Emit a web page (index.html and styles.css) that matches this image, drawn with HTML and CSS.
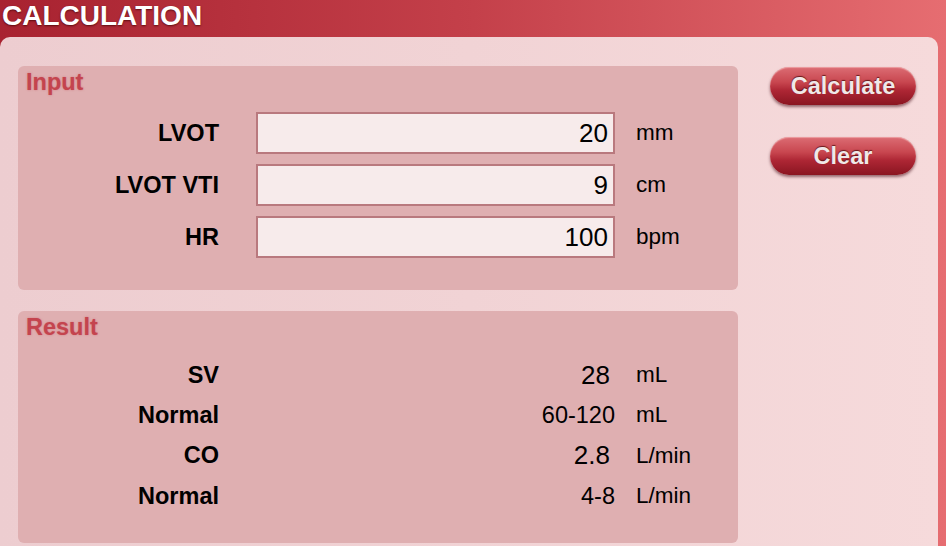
FILE: index.html
```html
<!DOCTYPE html>
<html lang="en">
<head>
    <meta charset="UTF-8">
    <meta name="viewport" content="width=device-width, initial-scale=1.0">
    <title>Calculation</title>
    <link rel="stylesheet" href="styles.css">
</head>
<body>
    <header class="topbar">
        <h1>CALCULATION</h1>
    </header>

    <main class="panel">
        <div class="sections">
            <section class="box box-input">
                <h2>Input</h2>
                <div class="rows">
                    <label for="lvot">LVOT</label>
                    <input type="text" id="lvot" value="20">
                    <span class="unit">mm</span>

                    <label for="vti">LVOT VTI</label>
                    <input type="text" id="vti" value="9">
                    <span class="unit">cm</span>

                    <label for="hr">HR</label>
                    <input type="text" id="hr" value="100">
                    <span class="unit">bpm</span>
                </div>
            </section>

            <section class="box box-result">
                <h2>Result</h2>
                <div class="rows results">
                    <span class="name">SV</span>
                    <span class="value">28</span>
                    <span class="unit">mL</span>

                    <span class="name">Normal</span>
                    <span class="value range">60-120</span>
                    <span class="unit">mL</span>

                    <span class="name">CO</span>
                    <span class="value">2.8</span>
                    <span class="unit">L/min</span>

                    <span class="name">Normal</span>
                    <span class="value range">4-8</span>
                    <span class="unit">L/min</span>
                </div>
            </section>
        </div>

        <div class="actions">
            <button type="button">Calculate</button>
            <button type="button">Clear</button>
        </div>
    </main>
</body>
</html>
```

FILE: styles.css
```css
/* Estilos generales */
html {
    background: linear-gradient(to right, #a82230 0%, #c4404a 50%, #e66d71 100%);
}

body {
    margin: 0;
    font-family: 'Liberation Sans', Arial, sans-serif;
    color: #000;
    overflow: hidden;
}

.topbar {
    height: 37px;
    box-sizing: border-box;
    padding-top: 2px;
}

.topbar h1 {
    margin: 0;
    padding-left: 2px;
    font-size: 28px;
    line-height: 27px;
    font-weight: bold;
    color: #ffffff;
    text-shadow: 0 1px 2px rgba(60, 0, 0, 0.7);
}

.panel {
    display: flex;
    gap: 32px;
    margin-right: 8px;
    padding: 29px 22px 0 18px;
    height: 509px;
    box-sizing: border-box;
    background: linear-gradient(to right, #edcdd0 0%, #f1d3d5 50%, #f6dadb 100%);
    border-radius: 10px 10px 0 0;
}

.sections {
    display: flex;
    flex-direction: column;
    gap: 21px;
    width: 720px;
}

.box {
    background-color: #dfafb1;
    border-radius: 6px;
    padding: 3px 8px 0 8px;
    box-sizing: border-box;
}

.box-input {
    height: 224px;
}

.box-result {
    height: 232px;
}

.box h2 {
    margin: 0;
    font-size: 23.5px;
    line-height: 26px;
    font-weight: bold;
    color: #c4444e;
    text-shadow: 0 0 2px rgba(196, 68, 78, 0.5);
}

.rows {
    display: grid;
    grid-template-columns: 193px 359px auto;
    column-gap: 37px;
    row-gap: 10px;
    align-items: center;
    margin-top: 17px;
}

.rows .unit {
    margin-left: -16px;
    font-size: 22.5px;
}

label,
.name {
    text-align: right;
    font-size: 23.5px;
    font-weight: bold;
}

input[type="text"] {
    height: 42px;
    box-sizing: border-box;
    padding: 0 5px 0 6px;
    border: 2px solid #b9797e;
    background-color: #f7ebeb;
    font-family: inherit;
    font-size: 26px;
    text-align: right;
    color: #000;
    outline: none;
}

.results {
    margin-top: 15px;
    grid-auto-rows: 40.3px;
    row-gap: 0;
}

.value {
    text-align: right;
    font-size: 26px;
    padding-right: 5px;
}

.value.range {
    font-size: 23.5px;
    padding-right: 0;
}

.actions {
    display: flex;
    flex-direction: column;
    gap: 32px;
    padding-top: 1px;
    width: 146px;
}

button {
    height: 38px;
    border: none;
    border-radius: 19px;
    background: linear-gradient(to bottom, #dc6d74 0%, #c8464f 40%, #ad2634 62%, #8a1521 100%);
    box-shadow: 0 2px 3px rgba(70, 10, 20, 0.55), inset 0 1px 1px rgba(255, 210, 210, 0.5);
    font-family: inherit;
    font-size: 23.5px;
    font-weight: bold;
    color: #f0e8e8;
    text-shadow: 0 -1px 1px rgba(60, 0, 0, 0.7);
    cursor: pointer;
}
```
